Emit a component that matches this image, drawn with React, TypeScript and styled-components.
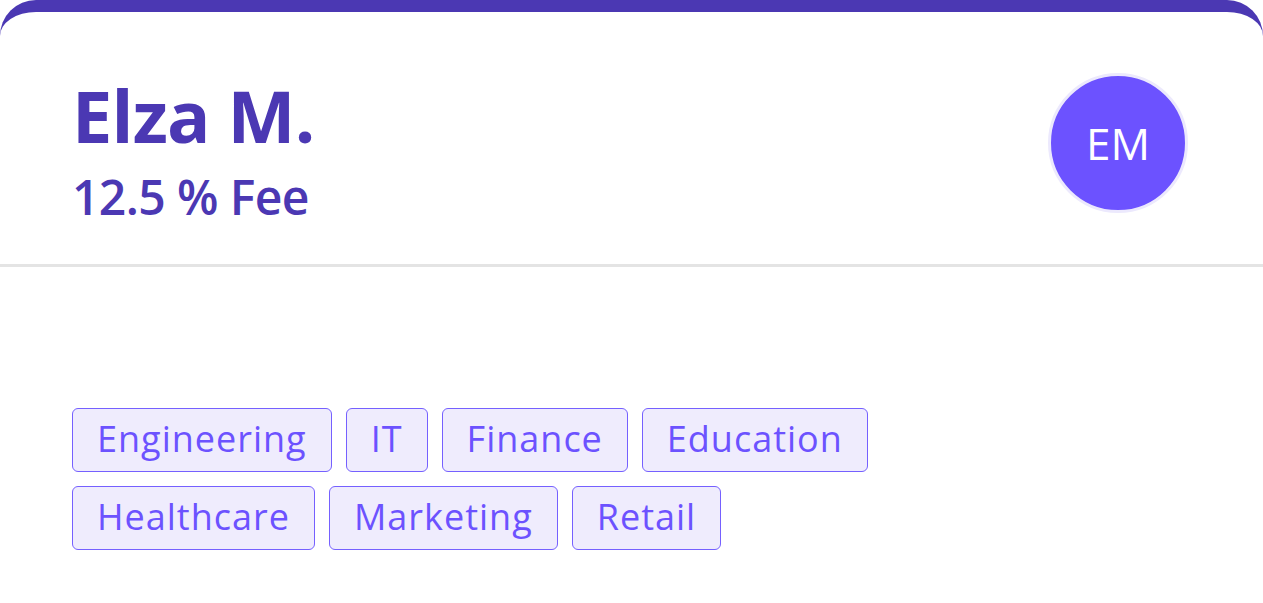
import styled, { createGlobalStyle } from "styled-components";

const GlobalStyle = createGlobalStyle`
  html, body {
    margin: 0;
    padding: 0;
    background: #ffffff;
  }
  body {
    font-family: "Open Sans", "Liberation Sans", sans-serif;
  }
`;

const Card = styled.section`
  width: 100%;
  min-height: 640px;
  box-sizing: border-box;
  background: #ffffff;
  border-top: 12px solid #4b38b3;
  border-radius: 36px 36px 0 0;
  display: flex;
  flex-direction: column;
`;

const Header = styled.header`
  height: 252px;
  box-sizing: border-box;
  padding: 61px 75px 0 72px;
  display: flex;
  justify-content: space-between;
  align-items: flex-start;
`;

const Identity = styled.div`
  display: flex;
  flex-direction: column;
  gap: 14px;
  padding-top: 2px;
  color: #4b38b3;
`;

const Name = styled.h1`
  margin: 0;
  font-size: 72px;
  line-height: 80px;
  font-weight: 700;
  letter-spacing: -0.8px;
`;

const Fee = styled.div`
  font-size: 48px;
  line-height: 56px;
  font-weight: 600;
  letter-spacing: -0.6px;
`;

const Avatar = styled.div`
  width: 140px;
  height: 140px;
  box-sizing: border-box;
  border-radius: 50%;
  border: 3px solid #ece9fd;
  background: #6c52ff;
  color: #ffffff;
  display: flex;
  align-items: center;
  justify-content: center;
  font-size: 44px;
  font-weight: 500;
`;

const Divider = styled.hr`
  margin: 0;
  border: none;
  height: 3px;
  background: #e4e4e4;
`;

const Body = styled.div`
  padding: 141px 72px 0;
`;

const TagList = styled.div`
  display: flex;
  flex-wrap: wrap;
  gap: 14px;
  max-width: 820px;
`;

const Tag = styled.span`
  box-sizing: border-box;
  height: 64px;
  padding: 6px 24px 7px;
  border: 1.5px solid #7560ff;
  border-radius: 6px;
  background: #efecfd;
  color: #6c52ff;
  font-size: 36px;
  line-height: 48px;
  font-weight: 400;
  letter-spacing: 1px;
`;

const tags = ["Engineering", "IT", "Finance", "Education", "Healthcare", "Marketing", "Retail"];

export default function App() {
  return (
    <>
      <GlobalStyle />
      <Card>
        <Header>
          <Identity>
            <Name>Elza M.</Name>
            <Fee>12.5 % Fee</Fee>
          </Identity>
          <Avatar>EM</Avatar>
        </Header>
        <Divider />
        <Body>
          <TagList>
            {tags.map((t) => (
              <Tag key={t}>{t}</Tag>
            ))}
          </TagList>
        </Body>
      </Card>
    </>
  );
}
